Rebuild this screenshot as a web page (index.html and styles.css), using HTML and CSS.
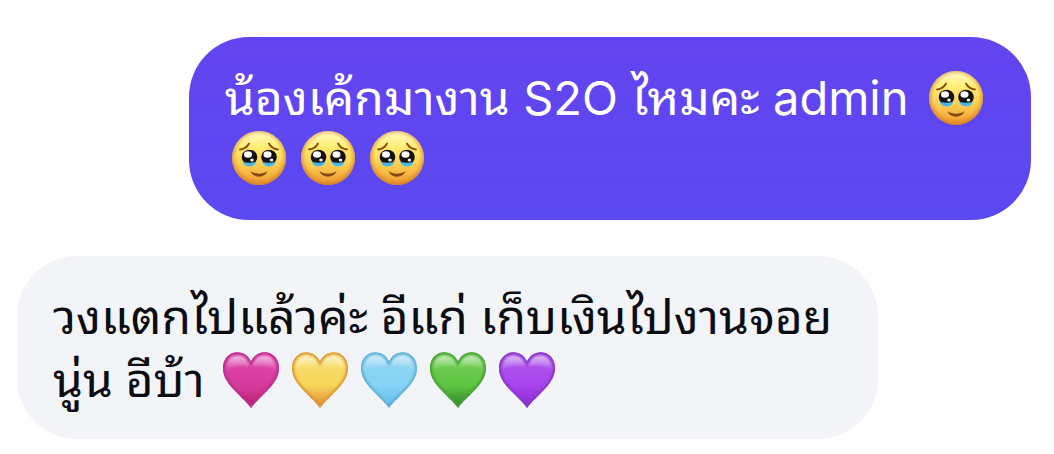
FILE: index.html
```html
<!DOCTYPE html>
<html lang="th">
<head>
<meta charset="utf-8">
<title>Chat</title>
<meta name="viewport" content="width=device-width, initial-scale=1">
<link rel="stylesheet" href="styles.css">
</head>
<body>
<svg class="defs" aria-hidden="true">
  <defs>
    <linearGradient id="skin" x1="0" y1="0" x2="0" y2="1">
      <stop offset="0" stop-color="#fffac8"/><stop offset=".3" stop-color="#ffee72"/><stop offset=".65" stop-color="#fbcb50"/><stop offset="1" stop-color="#ee9630"/>
    </linearGradient>
    <radialGradient id="rim" cx=".5" cy=".48" r=".53">
      <stop offset=".76" stop-color="#e08a25" stop-opacity="0"/><stop offset="1" stop-color="#c97522" stop-opacity=".8"/>
    </radialGradient>
    <linearGradient id="shine" x1="0" y1="0" x2="0" y2="1">
      <stop offset="0" stop-color="#fff" stop-opacity=".6"/><stop offset="1" stop-color="#fff" stop-opacity="0"/>
    </linearGradient>
    <linearGradient id="pink" x1="0" y1="0" x2="0" y2="1"><stop offset="0" stop-color="#e05ab8"/><stop offset=".35" stop-color="#db3fa4"/><stop offset=".68" stop-color="#d43797"/><stop offset="1" stop-color="#a81d60"/></linearGradient>
    <linearGradient id="yellow" x1="0" y1="0" x2="0" y2="1"><stop offset="0" stop-color="#f9df78"/><stop offset=".6" stop-color="#f6d658"/><stop offset="1" stop-color="#df8430"/></linearGradient>
    <linearGradient id="blue" x1="0" y1="0" x2="0" y2="1"><stop offset="0" stop-color="#92d3f0"/><stop offset=".6" stop-color="#85d3f6"/><stop offset="1" stop-color="#5fbbe6"/></linearGradient>
    <linearGradient id="green" x1="0" y1="0" x2="0" y2="1"><stop offset="0" stop-color="#79cf5c"/><stop offset=".6" stop-color="#5fc641"/><stop offset="1" stop-color="#2e7d25"/></linearGradient>
    <linearGradient id="purple" x1="0" y1="0" x2="0" y2="1"><stop offset="0" stop-color="#b35bea"/><stop offset=".6" stop-color="#a843ee"/><stop offset="1" stop-color="#8a2bd0"/></linearGradient>
    <path id="heart-shape" d="M28 56C25 51 15 42.500 8 34.500C3 28.500 0 23 0 16C0 6.500 6.500 .3 14.500 .3C20.500 .3 25.500 4 28 9.500C30.500 4 35.500 .3 41.500 .3C49.500 .3 56 6.500 56 16C56 23 53 28.500 48 34.500C41 42.500 31 51 28 56Z"/>
    <clipPath id="heart-clip"><use href="#heart-shape"/></clipPath>
    <filter id="soft" x="-20%" y="-20%" width="140%" height="140%"><feGaussianBlur stdDeviation=".8"/></filter>
    <symbol id="heart" viewBox="0 0 56 56">
      <use href="#heart-shape" stroke="none"/>
      <g clip-path="url(#heart-clip)">
        <g stroke="none" filter="url(#soft)">
          <path d="M3 18C3 8 8 3.500 14.500 3.500C21 3.500 25 7 27 14C20 13 9 13 3 18Z" fill="url(#shine)"/>
          <path d="M53 18C53 8 48 3.500 41.500 3.500C35 3.500 31 7 29 14C36 13 47 13 53 18Z" fill="url(#shine)"/>
        </g>
        <use href="#heart-shape" class="heart-edge" filter="url(#soft)"/>
      </g>
    </symbol>
    <symbol id="face" viewBox="0 0 56 56">
      <circle cx="28" cy="28" r="27" fill="url(#skin)"/>
      <circle cx="28" cy="28" r="27" fill="url(#rim)"/>
      <g fill="none" stroke="#8a4d0f" stroke-width="1.800" stroke-linecap="round">
        <path d="M9 19.500C13 19 16.500 16.500 18 13.500"/>
        <path d="M47 19.500C43 19 39.500 16.500 38 13.500"/>
      </g>
      <g id="eye">
        <ellipse cx="18.500" cy="32" rx="6.500" ry="4.500" fill="#62bfe4"/>
        <ellipse cx="18.500" cy="27" rx="7.800" ry="7.300" fill="#15110f"/>
        <path d="M12.500 32Q18.500 33.500 24.500 32Q22 36 18.500 36Q15 36 12.500 32Z" fill="#48b4e6"/>
        <ellipse cx="17" cy="24.500" rx="4" ry="3.300" fill="#fff"/>
        <ellipse cx="21" cy="30" rx="1.800" ry="1.500" fill="#e9f6fc"/>
      </g>
      <use href="#eye" x="19.500"/>
      <path d="M19.500 41C24 44.500 32 44.500 36.500 41C34 48.500 22 48.500 19.500 41Z" fill="#85490f"/>
    </symbol>
  </defs>
</svg>
<main class="chat">
  <p class="bubble sent">น้องเค้กมางาน <span class="latin">S2O</span> ไหมคะ <span class="latin">admin</span> <svg class="emoji" role="img" aria-label="🥹"><use href="#face"/></svg><br><svg class="emoji" role="img" aria-label="🥹"><use href="#face"/></svg><svg class="emoji" role="img" aria-label="🥹"><use href="#face"/></svg><svg class="emoji" role="img" aria-label="🥹"><use href="#face"/></svg></p>
  <p class="bubble received">วงแตกไปแล้วค่ะ อีแก่ เก็บเงินไปงานจอย<br>นู่น อีบ้า <svg class="emoji pink" role="img" aria-label="🩷"><use href="#heart"/></svg><svg class="emoji yellow" role="img" aria-label="💛"><use href="#heart"/></svg><svg class="emoji blue" role="img" aria-label="🩵"><use href="#heart"/></svg><svg class="emoji green" role="img" aria-label="💚"><use href="#heart"/></svg><svg class="emoji purple" role="img" aria-label="💜"><use href="#heart"/></svg></p>
</main>
</body>
</html>
```
FILE: styles.css
```css
body {
  margin: 0;
  background: #fff;
}

.defs {
  position: absolute;
  width: 0;
  height: 0;
}

.chat {
  display: flex;
  flex-direction: column;
  gap: 36px;
  padding: 37px 23px 15px 17px;
}

.bubble {
  box-sizing: border-box;
  margin: 0;
  padding: 27px 40px 36px 36px;
  border-radius: 60px;
  font-family: "Noto Sans Thai Looped", "Noto Looped Thai", Loma, Garuda, Umpush, Waree, Sarabun, Thonburi, Inter, "Noto Sans Thai", "Noto Sans", sans-serif;
  font-size: 48px;
  line-height: 60px;
}

.latin {
  margin: 0 1px;
  font-family: Inter, sans-serif;
  font-size: 47px;
  line-height: 1;
}

.sent {
  align-self: flex-end;
  color: #fff;
  background: linear-gradient(#6344f0, #5a49f1);
}

.received {
  align-self: flex-start;
  padding: 25px 46px 32px 36px;
  line-height: 63px;
  color: #0b0d12;
  background: #f3f4f7;
}

.emoji {
  width: 56px;
  height: 56px;
  margin: -8px 7px -8px 6px;
  vertical-align: -3px;
}

.pink { fill: url(#pink); stroke: #b92d8c; }
.yellow { fill: url(#yellow); stroke: #dc9638; }
.blue { fill: url(#blue); stroke: #62afd4; }
.green { fill: url(#green); stroke: #4aa238; }
.purple { fill: url(#purple); stroke: #8737c4; }

.heart-edge {
  fill: none;
  stroke-width: 4px;
}
```
